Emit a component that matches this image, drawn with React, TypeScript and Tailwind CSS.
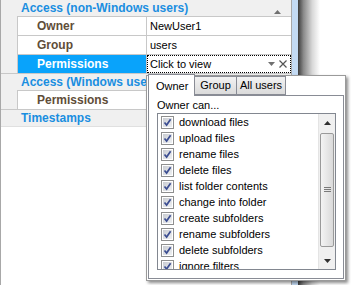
import React from "react";

const items = [
  "download files",
  "upload files",
  "rename files",
  "delete files",
  "list folder contents",
  "change into folder",
  "create subfolders",
  "rename subfolders",
  "delete subfolders",
  "ignore filters",
];

function Category({ label, arrow, clip }: { label: string; arrow?: boolean; clip?: boolean }) {
  return (
    <div className="h-[17px] shrink-0 bg-[#f0f0f0] border-t border-[#c8c8c8] flex items-center pl-[20px] pr-[8px] text-[12px] font-bold text-[#1a8ee0] relative">
      <span className={clip ? "w-[125px] overflow-hidden whitespace-nowrap" : "flex-1 whitespace-nowrap"}>{label}</span>
      {clip && <span className="flex-1" />}
      {arrow && (
        <svg width="7" height="4" viewBox="0 0 7 4" className="mt-[8px] mr-[2px]">
          <path d="M0 4 L3.5 0 L7 4 Z" fill="#707070" />
        </svg>
      )}
    </div>
  );
}

function Prop({
  name,
  value,
  selected,
}: {
  name: string;
  value: React.ReactNode;
  selected?: boolean;
}) {
  return (
    <div className="h-[19px] shrink-0 flex bg-[#f0f0f0]">
      <div className="w-[16px] shrink-0" />
      <div
        className={
          selected
            ? "w-[129px] shrink-0 border-t border-l border-[#c8c8c8] bg-[#09a3fb] text-white font-bold text-[12px] pl-[19px] flex items-center"
            : "w-[129px] shrink-0 border-t border-l border-[#c8c8c8] bg-white text-[#5f4d38] font-bold text-[12px] pl-[19px] flex items-center"
        }
      >
        {name}
      </div>
      <div className="flex-1 border-t border-l border-[#c8c8c8] bg-white text-[11px] text-black flex items-center">
        {value}
      </div>
    </div>
  );
}

function CheckBox() {
  return (
    <div className="w-[13px] h-[13px] shrink-0 border border-[#8e8f8f] bg-white p-[1px]">
      <div className="w-full h-full bg-[linear-gradient(135deg,#c9ccd2,#eef0f2)] relative">
        <svg width="9" height="9" viewBox="0 0 9 9" className="absolute left-0 top-0">
          <path d="M1.5 4.5 L3.6 7 L7.6 1.2" stroke="#3b4d91" strokeWidth="1.7" fill="none" />
        </svg>
      </div>
    </div>
  );
}

export default function App() {
  return (
    <div
      className="w-[351px] h-[285px] relative overflow-hidden bg-white flex"
      style={{ fontFamily: '"Liberation Sans", Arial, sans-serif' }}
    >
      {/* property grid */}
      <div className="w-[292px] h-full shrink-0 border-l border-r border-[#a8a8a8] bg-white flex flex-col">
        <div className="-mt-[1px] flex flex-col">
          <Category label="Access (non-Windows users)" arrow />
        </div>
        <Prop name="Owner" value={<span className="pl-[3px]">NewUser1</span>} />
        <Prop name="Group" value={<span className="pl-[3px]">users</span>} />
        <Prop
          name="Permissions"
          selected
          value={
            <div className="w-full h-full border border-dotted border-black flex items-center pl-[2px] pr-[3px]">
              <span className="flex-1">Click to view</span>
              <svg width="7" height="4" viewBox="0 0 7 4" className="mr-[4px]">
                <path d="M0 0 L7 0 L3.5 4 Z" fill="#707070" />
              </svg>
              <svg width="8" height="8" viewBox="0 0 8 8">
                <path d="M0.5 0.5 L7.5 7.5 M7.5 0.5 L0.5 7.5" stroke="#555" strokeWidth="1.2" />
              </svg>
            </div>
          }
        />
        <Category label="Access (Windows users)" clip />
        <Prop name="Permissions" value={<span className="pl-[3px]"></span>} />
        <Category label="Timestamps" />
        <div className="border-t border-[#e0e0e0] flex-1 bg-white" />
      </div>
      <div className="w-[6px] h-full shrink-0 bg-[#c3daf3]" />
      <div className="w-[22px] h-full shrink-0 bg-[linear-gradient(to_right,#3c3c3c,#8a8a8a_25%,#d8d8d8_65%,#ffffff)]" />
      <div className="flex-1 h-full bg-white" />

      {/* popup */}
      <div className="absolute left-[146px] top-[75px] w-[200px] h-[206px] border border-[#9a9a9a] bg-white shadow-[2px_2px_3px_rgba(0,0,0,0.45)] flex flex-col pl-[1px] pr-[1px] pb-[1px]">
        {/* tab strip */}
        <div className="h-[19px] shrink-0 flex items-end relative z-10 text-[11px] text-black">
          <div className="h-[22px] w-[47px] -mb-[1px] border border-b-0 border-[#898c95] bg-white flex items-start pt-[3px] pl-[7px]">
            Owner
          </div>
          <div className="h-[19px] w-[43px] -ml-[1px] border border-[#898c95] bg-[linear-gradient(#f2f2f2,#dbdbdb)] flex items-center justify-center">
            Group
          </div>
          <div className="h-[19px] w-[50px] -ml-[1px] border border-[#898c95] bg-[linear-gradient(#f2f2f2,#dbdbdb)] flex items-center justify-center">
            All users
          </div>
        </div>
        <div className="flex-1 border border-[#898c95] bg-white flex flex-col pl-[8px] pr-[7px] pb-[8px]">
          <div className="h-[17px] shrink-0 text-[11px] text-black flex items-center pt-[2px]">
            Owner can...
          </div>
          <div className="h-[157px] shrink-0 border border-[#828790] bg-white flex overflow-hidden">
            <div className="flex-1 flex flex-col overflow-hidden">
              {items.map((t) => (
                <div key={t} className="h-[16px] shrink-0 flex items-center pl-[3px] gap-[5px] text-[11px] text-black">
                  <CheckBox />
                  <span>{t}</span>
                </div>
              ))}
            </div>
            {/* scrollbar */}
            <div className="w-[17px] shrink-0 bg-[#f0f0f0] border-l border-[#e4e4e4] flex flex-col">
              <div className="h-[17px] shrink-0 flex items-center justify-center">
                <svg width="7" height="4" viewBox="0 0 7 4">
                  <path d="M0 4 L3.5 0 L7 4 Z" fill="#303030" />
                </svg>
              </div>
              <div className="h-[114px] shrink-0 mx-[1px] mt-[2px] rounded-[2px] border border-[#9a9a9a] bg-[linear-gradient(to_right,#f4f4f4,#dadada)] flex items-center justify-center">
                <svg width="7" height="6" viewBox="0 0 7 6">
                  <path d="M0 0.5 H7 M0 2.5 H7 M0 4.5 H7" stroke="#7a7a7a" strokeWidth="1" />
                </svg>
              </div>
              <div className="flex-1" />
              <div className="h-[17px] shrink-0 flex items-center justify-center">
                <svg width="7" height="4" viewBox="0 0 7 4">
                  <path d="M0 0 L7 0 L3.5 4 Z" fill="#303030" />
                </svg>
              </div>
            </div>
          </div>
        </div>
      </div>
    </div>
  );
}
